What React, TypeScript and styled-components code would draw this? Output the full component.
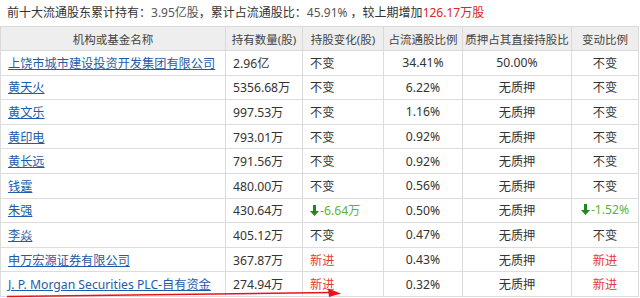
import styled, { createGlobalStyle } from "styled-components";

const GlobalStyle = createGlobalStyle`
  body {
    margin: 0;
    background: #fff;
    font-family: "Noto Sans", "Noto Sans CJK SC", sans-serif;
    color: #333;
  }
`;

const Page = styled.div`
  position: relative;
  width: 640px;
  height: 298px;
  overflow: hidden;
  background: #fff;
`;

const Summary = styled.div`
  height: 26px;
  line-height: 26px;
  padding-left: 7px;
  font-size: 12px;
  color: #333;
  white-space: pre;
`;

const Num = styled.span<{ $red?: boolean }>`
  color: ${(p) => (p.$red ? "#e02424" : "#555")};
`;

const Table = styled.table`
  width: 638px;
  border-collapse: collapse;
  table-layout: fixed;
  font-size: 12.2px;
`;

const Th = styled.th`
  height: 23px;
  padding: 0;
  background: #eeeeee;
  border: 1px solid #d9d9d9;
  font-weight: normal;
  font-size: 11.5px;
  color: #444;
  text-align: center;
  white-space: nowrap;
`;

const Td = styled.td<{ $align?: "left" | "center" }>`
  height: 23.6px;
  padding: 0 0 0 ${(p) => (p.$align === "center" ? "0" : "7px")};
  border: 1px solid #dcdcdc;
  text-align: ${(p) => p.$align ?? "left"};
  white-space: nowrap;
  color: #333;
`;

const NameLink = styled.a`
  color: #1f5ba8;
  text-decoration: underline;
`;

const Change = styled.span<{ $kind: "same" | "down" | "new" }>`
  display: inline-flex;
  align-items: center;
  gap: 1px;
  color: ${(p) =>
    p.$kind === "down" ? "#5cb531" : p.$kind === "new" ? "#e03a3a" : "#333"};
`;

const Arrow = styled.svg`
  width: 9px;
  height: 11px;
`;

const Annotation = styled.svg`
  position: absolute;
  left: 0;
  top: 286px;
  width: 350px;
  height: 12px;
  pointer-events: none;
`;

type Kind = "same" | "down" | "new";

interface Row {
  name: string;
  amount: string;
  change: string;
  changeKind: Kind;
  ratio: string;
  pledge: string;
  delta: string;
  deltaKind: Kind;
}

const rows: Row[] = [
  { name: "上饶市城市建设投资开发集团有限公司", amount: "2.96亿", change: "不变", changeKind: "same", ratio: "34.41%", pledge: "50.00%", delta: "不变", deltaKind: "same" },
  { name: "黄天火", amount: "5356.68万", change: "不变", changeKind: "same", ratio: "6.22%", pledge: "无质押", delta: "不变", deltaKind: "same" },
  { name: "黄文乐", amount: "997.53万", change: "不变", changeKind: "same", ratio: "1.16%", pledge: "无质押", delta: "不变", deltaKind: "same" },
  { name: "黄印电", amount: "793.01万", change: "不变", changeKind: "same", ratio: "0.92%", pledge: "无质押", delta: "不变", deltaKind: "same" },
  { name: "黄长远", amount: "791.56万", change: "不变", changeKind: "same", ratio: "0.92%", pledge: "无质押", delta: "不变", deltaKind: "same" },
  { name: "钱霆", amount: "480.00万", change: "不变", changeKind: "same", ratio: "0.56%", pledge: "无质押", delta: "不变", deltaKind: "same" },
  { name: "朱强", amount: "430.64万", change: "-6.64万", changeKind: "down", ratio: "0.50%", pledge: "无质押", delta: "-1.52%", deltaKind: "down" },
  { name: "李焱", amount: "405.12万", change: "不变", changeKind: "same", ratio: "0.47%", pledge: "无质押", delta: "不变", deltaKind: "same" },
  { name: "申万宏源证券有限公司", amount: "367.87万", change: "新进", changeKind: "new", ratio: "0.43%", pledge: "无质押", delta: "新进", deltaKind: "new" },
  { name: "J. P. Morgan Securities PLC-自有资金", amount: "274.94万", change: "新进", changeKind: "new", ratio: "0.32%", pledge: "无质押", delta: "新进", deltaKind: "new" },
];

function DownArrow() {
  return (
    <Arrow viewBox="0 0 9 11">
      <path d="M3 0h3v6h3L4.5 11 0 6h3z" fill="#1e8a1e" />
    </Arrow>
  );
}

function ChangeCell({ text, kind }: { text: string; kind: Kind }) {
  return (
    <Change $kind={kind}>
      {kind === "down" && <DownArrow />}
      {text}
    </Change>
  );
}

export default function App() {
  return (
    <Page>
      <GlobalStyle />
      <Summary>
        {"前十大流通股东累计持有："}
        <Num>3.95亿股</Num>
        {"，累计占流通股比："}
        <Num>45.91%</Num>
        {" ，较上期增加"}
        <Num $red>126.17万股</Num>
      </Summary>
      <Table>
        <colgroup>
          <col style={{ width: 225 }} />
          <col style={{ width: 77 }} />
          <col style={{ width: 81 }} />
          <col style={{ width: 79 }} />
          <col style={{ width: 109 }} />
          <col style={{ width: 67 }} />
        </colgroup>
        <thead>
          <tr>
            <Th>机构或基金名称</Th>
            <Th>持有数量(股)</Th>
            <Th>持股变化(股)</Th>
            <Th>占流通股比例</Th>
            <Th>质押占其直接持股比</Th>
            <Th>变动比例</Th>
          </tr>
        </thead>
        <tbody>
          {rows.map((r) => (
            <tr key={r.name}>
              <Td>
                <NameLink>{r.name}</NameLink>
              </Td>
              <Td>{r.amount}</Td>
              <Td>
                <ChangeCell text={r.change} kind={r.changeKind} />
              </Td>
              <Td $align="center">{r.ratio}</Td>
              <Td $align="center">{r.pledge}</Td>
              <Td $align="center">
                <ChangeCell text={r.delta} kind={r.deltaKind} />
              </Td>
            </tr>
          ))}
        </tbody>
      </Table>
      <Annotation viewBox="0 0 350 12">
        <path d="M7 10.5 L332 6.5" stroke="#e8141c" strokeWidth="1.6" fill="none" />
        <path d="M328 2.5 L341 7.5 L329 11 Z" fill="#e8141c" />
      </Annotation>
    </Page>
  );
}
